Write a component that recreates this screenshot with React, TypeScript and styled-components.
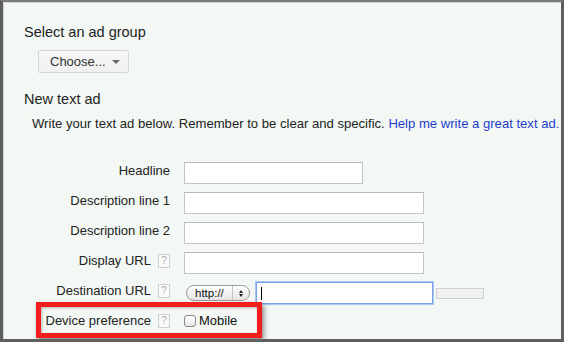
import React from "react";
import styled, { createGlobalStyle } from "styled-components";

const Global = createGlobalStyle`
  html, body { margin: 0; padding: 0; background: #fff; }
  body { font-family: "Liberation Sans", Arial, sans-serif; color: #222; }
  * { box-sizing: border-box; }
`;

const Frame = styled.div`
  position: relative;
  width: 564px;
  height: 342px;
  overflow: hidden;
  background: #f3f8f4;
  border-left: 3px solid #5f5f5f;
  border-right: 3px solid #5f5f5f;
  border-bottom: 3px solid #5f5f5f;
  border-top: 2px solid #7a7a7a;
  box-shadow: inset 1px 1px 0 #d4d8d5;
  padding: 21px 0 0 21px;
  display: flex;
  flex-direction: column;
`;

const SectionTitle = styled.div<{ $mt?: number }>`
  font-size: 14.5px;
  line-height: 18px;
  color: #222;
  margin-top: ${(p) => p.$mt ?? 0}px;
`;

const ChooseButton = styled.button`
  align-self: flex-start;
  margin: 9px 0 0 14px;
  width: 91px;
  height: 23px;
  padding: 0 0 0 11px;
  display: flex;
  align-items: center;
  gap: 6px;
  font-family: "Liberation Sans", Arial, sans-serif;
  font-size: 13px;
  color: #333;
  background: linear-gradient(#f6f6f6, #f0f0f0);
  border: 1px solid #d6d6d6;
  border-radius: 2px;
`;

const Caret = styled.span`
  width: 0;
  height: 0;
  border-left: 4px solid transparent;
  border-right: 4px solid transparent;
  border-top: 4px solid #666;
  margin-top: 1px;
`;

const Intro = styled.div`
  margin: 8px 0 0 8px;
  font-size: 13.1px;
  line-height: 16px;
  white-space: nowrap;
  color: #222;
`;

const Link = styled.a`
  color: #1f3ccc;
  text-decoration: none;
`;

const Form = styled.div`
  margin-top: 30px;
  display: grid;
  grid-template-columns: 146px auto;
  column-gap: 14px;
  row-gap: 8px;
  align-items: center;
`;

const Label = styled.div<{ $dy?: number }>`
  display: flex;
  justify-content: flex-end;
  align-items: center;
  gap: 7px;
  font-size: 13px;
  line-height: 16px;
  color: #222;
  white-space: nowrap;
  margin-top: ${(p) => p.$dy ?? -5}px;
`;

const Help = styled.span`
  width: 12px;
  height: 14px;
  border: 1px solid #cfcfcf;
  background: #fafafa;
  color: #aaa;
  font-size: 10px;
  line-height: 12px;
  text-align: center;
`;

const TextInput = styled.input<{ $w: number }>`
  width: ${(p) => p.$w}px;
  height: 22px;
  border: 1px solid #c4c4c4;
  border-top-color: #b8b8b8;
  background: #fff;
  margin: 0;
  padding: 0 4px;
  outline: none;
`;

const UrlRow = styled.div`
  display: flex;
  align-items: center;
  margin-left: 2px;
`;

const Select = styled.div`
  width: 64px;
  height: 16px;
  border: 1px solid #9a9a9a;
  border-radius: 8px;
  background: linear-gradient(#ffffff, #e4e4e4);
  display: flex;
  align-items: center;
  font-size: 11.5px;
  color: #111;
`;

const SelectText = styled.span`
  flex: 1;
  padding-left: 8px;
`;

const SelectArrows = styled.span`
  width: 17px;
  height: 100%;
  border-left: 1px solid #c4c4c4;
  display: flex;
  flex-direction: column;
  align-items: center;
  justify-content: center;
  gap: 1px;
`;

const Tri = styled.span<{ $up?: boolean }>`
  width: 0;
  height: 0;
  border-left: 2.5px solid transparent;
  border-right: 2.5px solid transparent;
  ${(p) => (p.$up ? "border-bottom: 3px solid #222;" : "border-top: 3px solid #222;")}
`;

const FocusedInput = styled.div`
  margin-left: 6px;
  width: 177px;
  height: 22px;
  background: #fff;
  border: 1px solid #7ba3e6;
  box-shadow: 0 0 0 1px #a9c6f2;
  display: flex;
  align-items: center;
  padding-left: 4px;
`;

const TextCaret = styled.span`
  width: 1px;
  height: 13px;
  background: #000;
`;

const Disabled = styled.div`
  margin-left: 3px;
  width: 48px;
  height: 11px;
  border: 1px solid #cfcfcf;
  background: #eef1ef;
`;

const CheckRow = styled.label`
  display: flex;
  align-items: center;
  gap: 3px;
  font-size: 13px;
  line-height: 16px;
  color: #111;
  margin-top: 1px;
`;

const Checkbox = styled.span`
  width: 12px;
  height: 12px;
  border: 1px solid #8a8a8a;
  border-radius: 3px;
  background: linear-gradient(#ffffff, #e6e6e6);
`;

const Highlight = styled.div`
  position: absolute;
  left: 33px;
  top: 300px;
  width: 226px;
  height: 36px;
  border: 5px solid #f41d1d;
  box-shadow: 2px 3px 5px rgba(0, 0, 0, 0.45), inset 1px 1px 3px rgba(0, 0, 0, 0.25);
  pointer-events: none;
`;

export default function App() {
  return (
    <>
      <Global />
      <Frame>
        <SectionTitle>Select an ad group</SectionTitle>
        <ChooseButton>
          Choose... <Caret />
        </ChooseButton>
        <SectionTitle $mt={17}>New text ad</SectionTitle>
        <Intro>
          Write your text ad below. Remember to be clear and specific.{" "}
          <Link href="#">Help me write a great text ad.</Link>
        </Intro>
        <Form>
          <Label>Headline</Label>
          <TextInput $w={179} />
          <Label>Description line 1</Label>
          <TextInput $w={240} />
          <Label>Description line 2</Label>
          <TextInput $w={240} />
          <Label>
            Display URL <Help>?</Help>
          </Label>
          <TextInput $w={240} />
          <Label>
            Destination URL <Help>?</Help>
          </Label>
          <UrlRow>
            <Select>
              <SelectText>http://</SelectText>
              <SelectArrows>
                <Tri $up />
                <Tri />
              </SelectArrows>
            </Select>
            <FocusedInput>
              <TextCaret />
            </FocusedInput>
            <Disabled />
          </UrlRow>
          <Label $dy={1}>
            Device preference <Help>?</Help>
          </Label>
          <CheckRow>
            <Checkbox />
            Mobile
          </CheckRow>
        </Form>
        <Highlight />
      </Frame>
    </>
  );
}
